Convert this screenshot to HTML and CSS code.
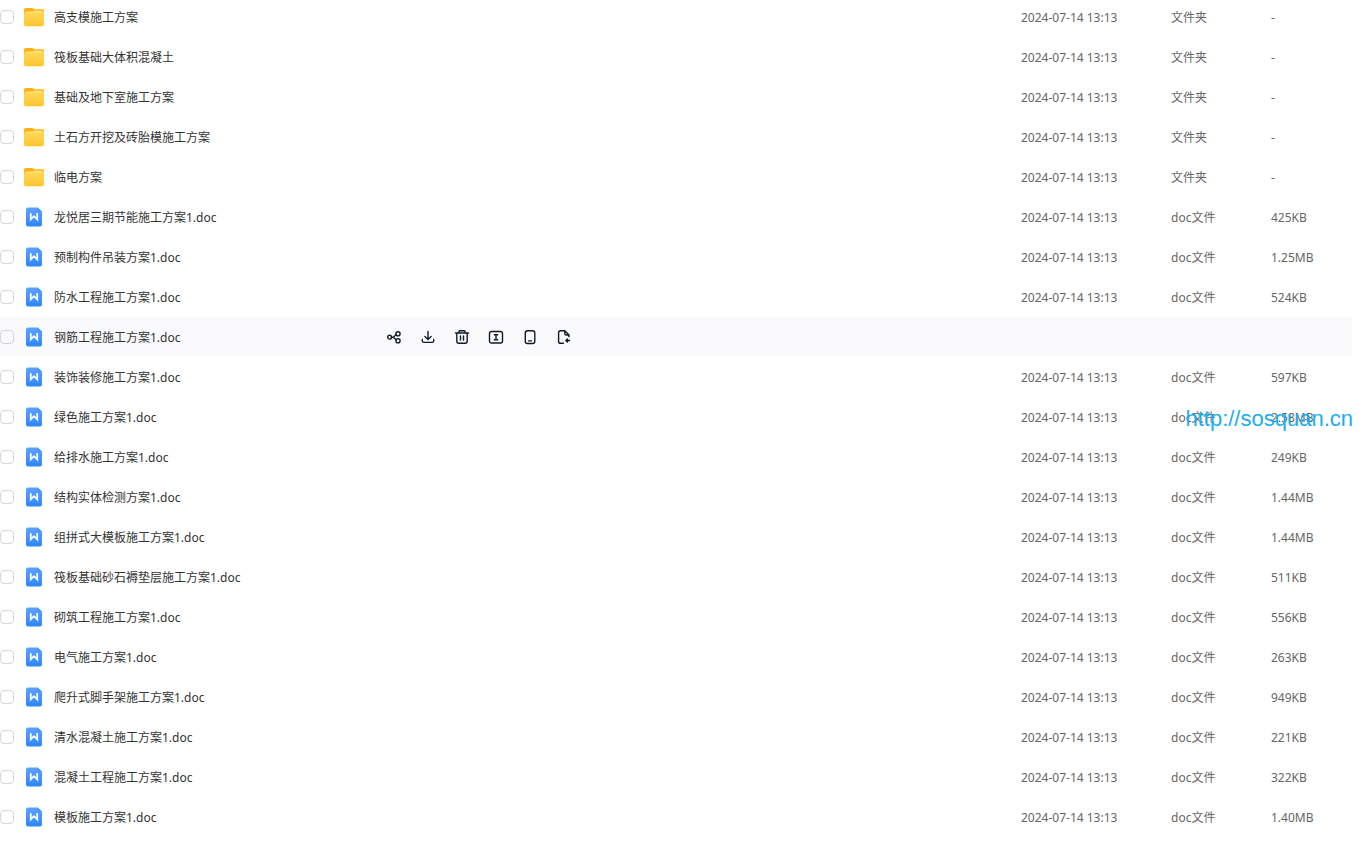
FILE: index.html
```html
<!DOCTYPE html>
<html lang="zh-CN">
<head>
    <meta charset="UTF-8">
    <meta name="viewport" content="width=device-width, initial-scale=1.0">
    <title>文件列表</title>
    <link rel="stylesheet" href="styles.css">
</head>
<body>
    <!-- Icon sprite -->
    <svg class="sprite" aria-hidden="true">
        <defs>
            <linearGradient id="folder-fill" x1="0" y1="0" x2="0" y2="1">
                <stop offset="0" stop-color="#ffdb5c"/>
                <stop offset="1" stop-color="#ffc62e"/>
            </linearGradient>
            <linearGradient id="doc-fill" x1="0" y1="0" x2="0" y2="1">
                <stop offset="0" stop-color="#5ea3ff"/>
                <stop offset="1" stop-color="#2f86fb"/>
            </linearGradient>
        </defs>
        <symbol id="icon-folder" viewBox="0 0 20 20">
            <path d="M0 2.6Q0 1 1.6 1H8.4Q9.2 1 9.7 1.6L10.4 2.2H18.4Q20 2.2 20 3.8V10H0Z" fill="#ffb412"/>
            <path d="M1.6 4.8H8.2Q8.8 4.8 9.3 4.4L9.7 4.1Q10.1 3.8 10.8 3.8H18.4V8H1.6Z" fill="#fff0b8"/>
            <path d="M0 6.9Q0 5.5 1.5 5.5H8.5Q9.2 5.5 9.7 5.1L10.1 4.8Q10.5 4.5 11.2 4.5H18.5Q20 4.5 20 6V17.6Q20 19.2 18.4 19.2H1.6Q0 19.2 0 17.6Z" fill="url(#folder-fill)"/>
        </symbol>
        <symbol id="icon-doc" viewBox="0 0 20 20">
            <path d="M4 .5H13.6L18 4.8V17.5Q18 19.5 16 19.5H4Q2 19.5 2 17.5V2.5Q2 .5 4 .5Z" fill="url(#doc-fill)"/>
            <path d="M13.6 .5L18 4.8H15.6Q13.6 4.8 13.6 2.8Z" fill="#4b90f5"/>
            <path d="M6.8 6.2V12.4L10 9.2L13.2 12.4V6.2" fill="none" stroke="#fff" stroke-width="1.8"/>
        </symbol>
        <symbol id="icon-share" viewBox="0 0 16 16">
            <circle cx="3.6" cy="8.2" r="1.9"/>
            <circle cx="12" cy="4.8" r="2.1"/>
            <circle cx="12" cy="11.8" r="2.1"/>
            <path d="M5.5 8.2H7.2L10.1 5.8M7.2 8.2L10.1 10.8"/>
        </symbol>
        <symbol id="icon-download" viewBox="0 0 16 16">
            <path d="M8 2.5V10.3M4.9 7.4L8 10.4L11.1 7.4M2.3 10.4V11.8Q2.3 13.4 3.9 13.4H12.1Q13.7 13.4 13.7 11.8V10.4"/>
        </symbol>
        <symbol id="icon-delete" viewBox="0 0 16 16">
            <path d="M1.5 4H14.5M4.6 3.8L5.4 1.7H10.6L11.4 3.8M2.8 4V12.3Q2.8 14.3 4.8 14.3H11.2Q13.2 14.3 13.2 12.3V4M6.5 7V11M9.5 7V11"/>
        </symbol>
        <symbol id="icon-rename" viewBox="0 0 16 16">
            <rect x="1.5" y="2.5" width="13" height="11.5" rx="2"/>
            <path d="M6.3 5.7H9.7M6.3 10.8H9.7M8 5.7V10.8"/>
        </symbol>
        <symbol id="icon-phone" viewBox="0 0 16 16">
            <rect x="3.3" y="1.8" width="9.5" height="12.7" rx="2.2"/>
            <path d="M6.6 11.9H9.5"/>
        </symbol>
        <symbol id="icon-move" viewBox="0 0 16 16">
            <path d="M7.4 14.3H4.5Q2.6 14.3 2.6 12.4V3.7Q2.6 1.8 4.5 1.8H8.8L13 6V7.8M8.8 1.8V4.5Q8.8 6 10.3 6H13"/>
            <path d="M13.6 11.5H10.4M11.4 10L9.9 11.5L11.4 13Z"/>
        </symbol>
    </svg>

    <table class="file-table">
        <colgroup>
            <col class="col-check">
            <col class="col-name">
            <col class="col-time">
            <col class="col-type">
            <col class="col-size">
        </colgroup>
        <tbody id="file-list"></tbody>
    </table>

    <a href="#" class="watermark">http://sosquan.cn</a>

    <script src="app.js"></script>
</body>
</html>
```
FILE: styles.css
```css
* {
    margin: 0;
    padding: 0;
    box-sizing: border-box;
}

body {
    position: relative;
    font-family: "Noto Sans", "Noto Sans CJK SC", sans-serif;
    font-size: 12px;
    line-height: 20px;
    background-color: #ffffff;
    color: #333333;
    overflow: hidden;
}

.sprite {
    position: absolute;
    width: 0;
    height: 0;
}

/* the list is scrolled slightly past its first row */
.file-table {
    width: calc(100% - 10px);
    margin-top: -3px;
    table-layout: fixed;
    border-collapse: separate;
    border-spacing: 0;
}

.col-check {
    width: 24px;
}

.col-time {
    width: 150px;
}

.col-type {
    width: 100px;
}

.col-size {
    width: 81px;
}

.file-row td {
    height: 40px;
    border-bottom: 1px solid #ffffff;
    vertical-align: middle;
    white-space: nowrap;
    color: #666666;
}

.file-row.active td {
    background-color: #fafafc;
}

.cell-text {
    display: block;
    padding-top: 2px;
}

.checkbox {
    display: block;
    appearance: none;
    width: 14px;
    height: 14px;
    border: 1px solid #d5d5d8;
    border-radius: 4px;
    cursor: pointer;
}

.checkbox:checked {
    background-color: #2f86fb;
}

.name-cell {
    display: flex;
    align-items: center;
}

.file-link {
    display: flex;
    align-items: center;
    gap: 10px;
    width: 362px;
    color: #333333;
    text-decoration: none;
}

.file-icon {
    width: 20px;
    height: 20px;
}

.actions {
    display: flex;
    gap: 18px;
}

.action-btn {
    display: block;
    width: 16px;
    height: 16px;
    border: none;
    background: none;
    cursor: pointer;
}

.action-icon {
    display: block;
    width: 16px;
    height: 16px;
    fill: none;
    stroke: #121a2a;
    stroke-width: 1.4;
    stroke-linecap: round;
    stroke-linejoin: round;
}

.watermark {
    position: absolute;
    top: 409px;
    right: 9px;
    font-family: "Liberation Sans", sans-serif;
    font-size: 22px;
    color: #1aaef0;
    text-decoration: none;
}
```
FILE: app.js
```javascript
const TIME = '2024-07-14 13:13';

// [name, size], folders have no size
const files = [
    ['高支模施工方案'],
    ['筏板基础大体积混凝土'],
    ['基础及地下室施工方案'],
    ['土石方开挖及砖胎模施工方案'],
    ['临电方案'],
    ['龙悦居三期节能施工方案1.doc', '425KB'],
    ['预制构件吊装方案1.doc', '1.25MB'],
    ['防水工程施工方案1.doc', '524KB'],
    ['钢筋工程施工方案1.doc', ''],
    ['装饰装修施工方案1.doc', '597KB'],
    ['绿色施工方案1.doc', '2.58MB'],
    ['给排水施工方案1.doc', '249KB'],
    ['结构实体检测方案1.doc', '1.44MB'],
    ['组拼式大模板施工方案1.doc', '1.44MB'],
    ['筏板基础砂石褥垫层施工方案1.doc', '511KB'],
    ['砌筑工程施工方案1.doc', '556KB'],
    ['电气施工方案1.doc', '263KB'],
    ['爬升式脚手架施工方案1.doc', '949KB'],
    ['清水混凝土施工方案1.doc', '221KB'],
    ['混凝土工程施工方案1.doc', '322KB'],
    ['模板施工方案1.doc', '1.40MB']
];

const actions = [
    ['share', '分享'],
    ['download', '下载'],
    ['delete', '删除'],
    ['rename', '重命名'],
    ['phone', '发送到手机'],
    ['move', '移动']
];

const activeIndex = 8;

function renderActions() {
    const buttons = actions.map(([icon, label]) => `
        <button type="button" class="action-btn" aria-label="${label}">
            <svg class="action-icon"><use href="#icon-${icon}"/></svg>
        </button>`).join('');
    return `<div class="actions">${buttons}</div>`;
}

function renderRow([name, size], index) {
    const isFolder = size === undefined;
    const active = index === activeIndex;
    const type = isFolder ? '文件夹' : 'doc文件';
    // the hovered row shows its actions instead of the details
    const details = active ? ['', '', ''] : [TIME, type, isFolder ? '-' : size];

    return `
        <tr class="file-row${active ? ' active' : ''}">
            <td><input type="checkbox" class="checkbox" aria-label="${name}"></td>
            <td>
                <div class="name-cell">
                    <a href="#" class="file-link">
                        <svg class="file-icon"><use href="#icon-${isFolder ? 'folder' : 'doc'}"/></svg>
                        <span class="cell-text">${name}</span>
                    </a>
                    ${active ? renderActions() : ''}
                </div>
            </td>
            ${details.map(text => `<td><span class="cell-text">${text}</span></td>`).join('')}
        </tr>`;
}

document.getElementById('file-list').innerHTML = files.map(renderRow).join('');
```
